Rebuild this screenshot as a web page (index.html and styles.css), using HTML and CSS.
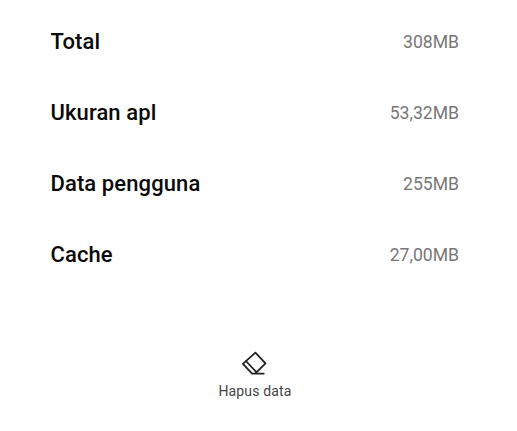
FILE: index.html
```html
<!DOCTYPE html>
<html lang="id">
<head>
    <meta charset="UTF-8">
    <title>Penyimpanan</title>
    <link rel="stylesheet" href="styles.css">
</head>
<body>
    <div class="storage-list">
        <div class="row">
            <span class="label">Total</span>
            <span class="value">308MB</span>
        </div>
        <div class="row">
            <span class="label">Ukuran apl</span>
            <span class="value">53,32MB</span>
        </div>
        <div class="row">
            <span class="label">Data pengguna</span>
            <span class="value">255MB</span>
        </div>
        <div class="row">
            <span class="label">Cache</span>
            <span class="value">27,00MB</span>
        </div>
    </div>

    <div class="actions">
        <button class="clear-btn">
            <svg class="icon" viewBox="0 0 28 28">
                <path d="M22.8 24.6 H11.1 L1.9 14.8 L14.4 3.6 L24.5 14.4 L14.6 24.2 M4.9 12 L15.4 23.2"/>
            </svg>
            <span>Hapus data</span>
        </button>
    </div>
</body>
</html>
```

FILE: styles.css
```css
body {
    font-family: Roboto, Arial, sans-serif;
    margin: 0;
    background-color: #fff;
}
.storage-list {
    padding: 6px 58px 0 50.5px;
}
.row {
    display: flex;
    justify-content: space-between;
    align-items: center;
    height: 71px;
}
.label {
    font-size: 22px;
    letter-spacing: 0.1px;
    font-weight: 500;
    color: #0a0a0a;
}
.value {
    font-size: 17.6px;
    color: #777;
}
.actions {
    display: flex;
    justify-content: center;
    padding: 59px 7px 0 0;
}
.clear-btn {
    display: flex;
    flex-direction: column;
    align-items: center;
    gap: 6px;
    padding: 0;
    border: none;
    background: none;
    font-family: inherit;
    font-size: 14px;
    letter-spacing: 0.15px;
    color: #444;
    cursor: pointer;
}
.icon {
    width: 28px;
    height: 28px;
    fill: none;
    stroke: #222;
    stroke-width: 1.8;
    stroke-linejoin: round;
    stroke-linecap: round;
}
```
